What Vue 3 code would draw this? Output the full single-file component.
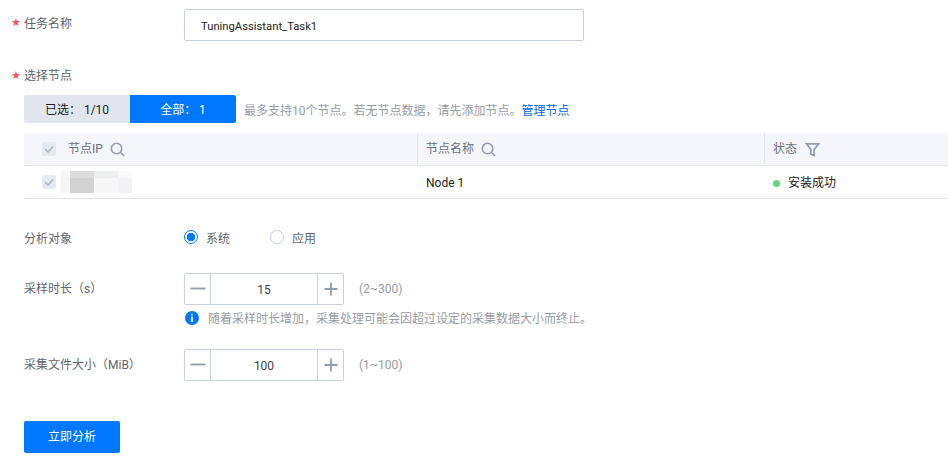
<script setup>
const columns = [
  { key: 'ip', label: '节点IP', icon: 'search' },
  { key: 'name', label: '节点名称', icon: 'search' },
  { key: 'status', label: '状态', icon: 'filter' }
]
const pixels = ['#f7f7f9', '#dcdcdc', '#ecedef', '#fafafb', '#f5f5f7', '#d2d2d2', '#f7f7f8', '#f2f2f5']
</script>

<template>
  <div class="page">
    <div class="field name-field">
      <label class="label required"><span class="star">★</span>任务名称</label>
      <input class="text-input" value="TuningAssistant_Task1" />
    </div>

    <label class="label required node-label"><span class="star">★</span>选择节点</label>
    <div class="tab-line">
      <div class="tabs">
        <span class="tab">已选：&nbsp;1/10</span>
        <span class="tab active">全部：&nbsp;1</span>
      </div>
      <span class="hint">最多支持10个节点。若无节点数据，请先添加节点。<a class="link">管理节点</a></span>
    </div>

    <div class="table">
      <div class="row head">
        <div v-for="c in columns" :key="c.key" class="cell" :class="c.key">
          <span v-if="c.key === 'ip'" class="check"><svg viewBox="0 0 14 14"><path d="M3 7l3 3 5-5.500" /></svg></span>
          <span>{{ c.label }}</span>
          <svg v-if="c.icon === 'search'" class="icon" viewBox="0 0 16 16">
            <circle cx="7" cy="7" r="5.600" />
            <path d="M11 11l4 4" />
          </svg>
          <svg v-else class="icon filter" viewBox="0 0 16 16">
            <path d="M1.500 2h13l-4.800 6v6.500l-3.400-1.500v-5z" />
          </svg>
        </div>
      </div>
      <div class="row body">
        <div class="cell ip">
          <span class="check"><svg viewBox="0 0 14 14"><path d="M3 7l3 3 5-5.500" /></svg></span>
          <span class="mosaic"><i v-for="(p, i) in pixels" :key="i" :style="{ background: p }"></i></span>
        </div>
        <div class="cell name">Node 1</div>
        <div class="cell status"><i class="dot"></i>安装成功</div>
      </div>
    </div>

    <div class="field radio-field">
      <label class="label">分析对象</label>
      <span class="radio on"></span><span class="radio-text">系统</span>
      <span class="radio"></span><span class="radio-text">应用</span>
    </div>

    <div class="field step-field">
      <label class="label">采样时长（s）</label>
      <div class="stepper">
        <span class="step"><svg viewBox="0 0 16 16"><path d="M0.500 7.500h15" /></svg></span>
        <span class="value">15</span>
        <span class="step"><svg viewBox="0 0 16 16"><path d="M1.500 8h13M8 1.500v13" /></svg></span>
      </div>
      <span class="range">(2~300)</span>
    </div>
    <div class="info">
      <svg class="info-icon" viewBox="0 0 14 14">
        <circle cx="7" cy="7" r="7" fill="#0a77f2" />
        <rect x="6.200" y="2.800" width="1.600" height="1.600" fill="#fff" />
        <rect x="6.200" y="5.600" width="1.600" height="5.400" fill="#fff" />
      </svg>
      <span class="info-text">随着采样时长增加，采集处理可能会因超过设定的采集数据大小而终止。</span>
    </div>

    <div class="field step-field size-field">
      <label class="label">采集文件大小（MiB）</label>
      <div class="stepper">
        <span class="step"><svg viewBox="0 0 16 16"><path d="M0.500 7.500h15" /></svg></span>
        <span class="value">100</span>
        <span class="step"><svg viewBox="0 0 16 16"><path d="M1.500 8h13M8 1.500v13" /></svg></span>
      </div>
      <span class="range">(1~100)</span>
    </div>

    <button class="primary">立即分析</button>
  </div>
</template>

<style>
html, body { background: #fff; overflow: hidden; }
</style>

<style scoped>
.page {
  width: 924px;
  height: 448px;
  padding: 9px 0 0 24px;
  overflow: hidden;
  font: 12px/16px Roboto, "Noto Sans CJK SC", sans-serif;
  color: #222;
  background: #fff;
}
.field { display: flex; align-items: center; }
.label { display: block; width: 160px; flex: none; color: #5f646c; position: relative; }
.star {
  position: absolute;
  left: -13px;
  top: 1px;
  color: #f4585a;
  font: 11px/14px "DejaVu Sans", sans-serif;
}
.name-field { align-items: flex-start; height: 32px; }
.name-field .label { padding-top: 7px; }
.name-field .star { top: 7px; }
.text-input {
  box-sizing: border-box;
  width: 400px;
  height: 32px;
  padding: 3px 16px 0;
  border: 1px solid #c6d1e0;
  border-radius: 2px;
  font: inherit;
  font-size: 11.250px;
  color: #222;
  outline: none;
}
.node-label { margin-top: 27px; }
.tab-line { display: flex; align-items: center; margin-top: 11px; height: 28px; }
.tabs { display: flex; border-radius: 2px; overflow: hidden; }
.tab {
  width: 106px;
  height: 28px;
  line-height: 30px;
  text-align: center;
  background: #e1e6ee;
  color: #222;
}
.tab.active { background: #0077ff; color: #fff; }
.hint { margin-left: 8px; padding-top: 3px; color: #959ba5; }
.link { color: #0067e6; }
.table { margin-top: 10px; }
.row { display: flex; box-sizing: border-box; height: 33px; border-bottom: 1px solid #e1e6ee; }
.head { background: #f4f6fa; }
.cell { box-sizing: border-box; display: flex; align-items: center; position: relative; }
.cell.ip { width: 393px; padding-left: 18px; }
.cell.name { width: 347px; padding-left: 8px; }
.cell.status { width: 184px; padding-left: 8px; }
.head .cell { color: #6b7078; }
.head .cell.name, .head .cell.status { border-left: 1px solid #e1e6ee; }
.body .cell.name, .body .cell.status { padding-left: 9px; padding-top: 2px; }
.check {
  width: 14px;
  height: 14px;
  border-radius: 2px;
  background: #e6e9f0;
  margin-right: 12px;
  display: flex;
}
.check svg { fill: none; stroke: #a9b3c4; stroke-width: 1.500; }
.icon { width: 15px; height: 15px; margin-left: 7px; fill: none; stroke: #8f9bb0; stroke-width: 1.600; }
.icon.filter { margin-left: 8px; stroke-width: 1.800; }
.mosaic {
  display: grid;
  grid-template-columns: 9px 24px 24px 14px;
  grid-template-rows: 7px 15px;
  margin-left: -7px;
}
.dot { width: 7px; height: 7px; border-radius: 50%; background: #62d67a; margin-right: 8px; }
.radio-field { margin-top: 30px; height: 16px; }
.radio-field .label { padding-top: 4px; }
.radio {
  box-sizing: border-box;
  width: 14px;
  height: 14px;
  border: 1px solid #c6d1e0;
  border-radius: 50%;
  margin-right: 8px;
}
.radio.on { border-color: #0077ff; background: radial-gradient(circle, #0077ff 0 4px, #fff 4.500px); }
.radio-text { width: 64px; padding-top: 3px; color: #5f646c; }
.step-field { margin-top: 28px; height: 32px; }
.stepper {
  box-sizing: border-box;
  display: flex;
  width: 160px;
  height: 32px;
  border: 1px solid #c6d1e0;
  border-radius: 2px;
}
.step { width: 25px; flex: none; display: flex; align-items: center; justify-content: center; }
.step svg { width: 16px; height: 16px; fill: none; stroke: #8f9bb0; stroke-width: 1.800; }
.value {
  flex: 1;
  text-align: center;
  line-height: 33px;
  border-left: 1px solid #c6d1e0;
  border-right: 1px solid #c6d1e0;
  color: #444;
}
.range { margin-left: 15px; color: #959ba5; }
.info { display: flex; align-items: center; margin: 5px 0 0 161px; height: 16px; color: #959ba5; }
.info-icon { width: 14px; height: 14px; margin-right: 9px; }
.info-text { padding-top: 2px; }
.size-field { margin-top: 23px; }
.primary {
  display: block;
  width: 96px;
  height: 32px;
  margin-top: 40px;
  border: 0;
  border-radius: 2px;
  background: #0077ff;
  color: #fff;
  font: inherit;
}
</style>
